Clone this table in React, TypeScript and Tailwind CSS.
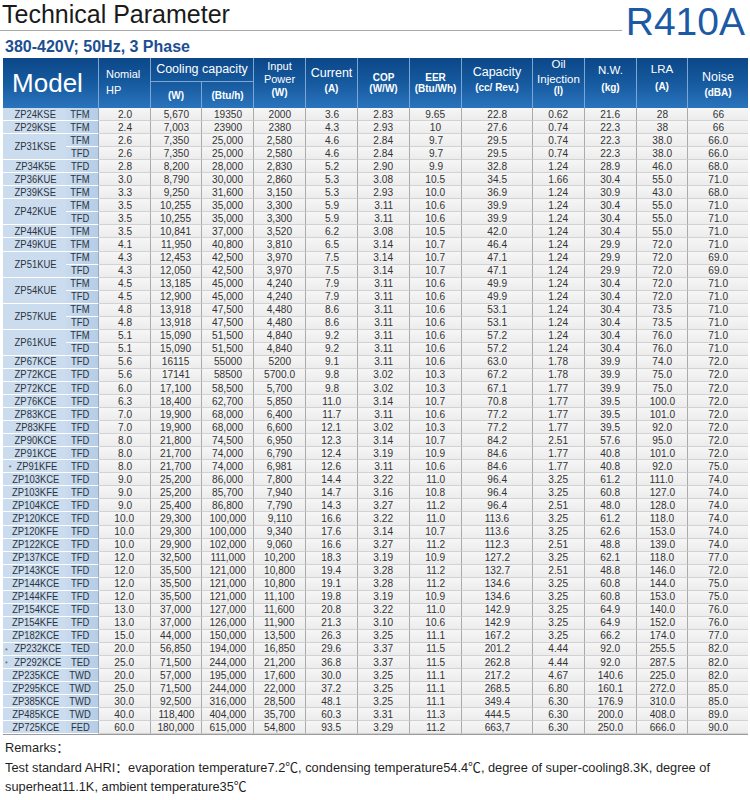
import React from "react";

// name (null = continues the model above), type, values
const rows: [string | null, string, string][] = [
  ["ZP24KSE", "TFM", "2.0 5,670 19350 2000 3.6 2.83 9.65 22.8 0.62 21.6 28 66"],
  ["ZP29KSE", "TFM", "2.4 7,003 23900 2380 4.3 2.93 10 27.6 0.74 22.3 38 66"],
  ["ZP31KSE", "TFM", "2.6 7,350 25,000 2,580 4.6 2.84 9.7 29.5 0.74 22.3 38.0 66.0"],
  [null, "TFD", "2.6 7,350 25,000 2,580 4.6 2.84 9.7 29.5 0.74 22.3 38.0 66.0"],
  ["ZP34K5E", "TFD", "2.8 8,200 28,000 2,830 5.2 2.90 9.9 32.8 1.24 28.9 46.0 68.0"],
  ["ZP36KUE", "TFM", "3.0 8,790 30,000 2,860 5.3 3.08 10.5 34.5 1.66 30.4 55.0 71.0"],
  ["ZP39KSE", "TFM", "3.3 9,250 31,600 3,150 5.3 2.93 10.0 36.9 1.24 30.9 43.0 68.0"],
  ["ZP42KUE", "TFM", "3.5 10,255 35,000 3,300 5.9 3.11 10.6 39.9 1.24 30.4 55.0 71.0"],
  [null, "TFD", "3.5 10,255 35,000 3,300 5.9 3.11 10.6 39.9 1.24 30.4 55.0 71.0"],
  ["ZP44KUE", "TFM", "3.5 10,841 37,000 3,520 6.2 3.08 10.5 42.0 1.24 30.4 55.0 71.0"],
  ["ZP49KUE", "TFM", "4.1 11,950 40,800 3,810 6.5 3.14 10.7 46.4 1.24 29.9 72.0 71.0"],
  ["ZP51KUE", "TFM", "4.3 12,453 42,500 3,970 7.5 3.14 10.7 47.1 1.24 29.9 72.0 69.0"],
  [null, "TFD", "4.3 12,050 42,500 3,970 7.5 3.14 10.7 47.1 1.24 29.9 72.0 69.0"],
  ["ZP54KUE", "TFM", "4.5 13,185 45,000 4,240 7.9 3.11 10.6 49.9 1.24 30.4 72.0 71.0"],
  [null, "TFD", "4.5 12,900 45,000 4,240 7.9 3.11 10.6 49.9 1.24 30.4 72.0 71.0"],
  ["ZP57KUE", "TFM", "4.8 13,918 47,500 4,480 8.6 3.11 10.6 53.1 1.24 30.4 73.5 71.0"],
  [null, "TFD", "4.8 13,918 47,500 4,480 8.6 3.11 10.6 53.1 1.24 30.4 73.5 71.0"],
  ["ZP61KUE", "TFM", "5.1 15,090 51,500 4,840 9.2 3.11 10.6 57.2 1.24 30.4 76.0 71.0"],
  [null, "TFD", "5.1 15,090 51,500 4,840 9.2 3.11 10.6 57.2 1.24 30.4 76.0 71.0"],
  ["ZP67KCE", "TFD", "5.6 16115 55000 5200 9.1 3.11 10.6 63.0 1.78 39.9 74.0 72.0"],
  ["ZP72KCE", "TFD", "5.6 17141 58500 5700.0 9.8 3.02 10.3 67.2 1.78 39.9 75.0 72.0"],
  ["ZP72KCE", "TFD", "6.0 17,100 58,500 5,700 9.8 3.02 10.3 67.1 1.77 39.9 75.0 72.0"],
  ["ZP76KCE", "TFD", "6.3 18,400 62,700 5,850 11.0 3.14 10.7 70.8 1.77 39.5 100.0 72.0"],
  ["ZP83KCE", "TFD", "7.0 19,900 68,000 6,400 11.7 3.11 10.6 77.2 1.77 39.5 101.0 72.0"],
  ["ZP83KFE", "TFD", "7.0 19,900 68,000 6,600 12.1 3.02 10.3 77.2 1.77 39.5 92.0 72.0"],
  ["ZP90KCE", "TFD", "8.0 21,800 74,500 6,950 12.3 3.14 10.7 84.2 2.51 57.6 95.0 72.0"],
  ["ZP91KCE", "TFD", "8.0 21,700 74,000 6,790 12.4 3.19 10.9 84.6 1.77 40.8 101.0 72.0"],
  ["*ZP91KFE", "TFD", "8.0 21,700 74,000 6,981 12.6 3.11 10.6 84.6 1.77 40.8 92.0 75.0"],
  ["ZP103KCE", "TFD", "9.0 25,200 86,000 7,800 14.4 3.22 11.0 96.4 3.25 61.2 111.0 74.0"],
  ["ZP103KFE", "TFD", "9.0 25,200 85,700 7,940 14.7 3.16 10.8 96.4 3.25 60.8 127.0 74.0"],
  ["ZP104KCE", "TFD", "9.0 25,400 86,800 7,790 14.3 3.27 11.2 96.4 2.51 48.0 128.0 74.0"],
  ["ZP120KCE", "TFD", "10.0 29,300 100,000 9,110 16.6 3.22 11.0 113.6 3.25 61.2 118.0 74.0"],
  ["ZP120KFE", "TFD", "10.0 29,300 100,000 9,340 17.6 3.14 10.7 113.6 3.25 62.6 153.0 74.0"],
  ["ZP122KCE", "TFD", "10.0 29,900 102,000 9,060 16.6 3.27 11.2 112.3 2.51 48.8 139.0 74.0"],
  ["ZP137KCE", "TFD", "12.0 32,500 111,000 10,200 18.3 3.19 10.9 127.2 3.25 62.1 118.0 77.0"],
  ["ZP143KCE", "TFD", "12.0 35,500 121,000 10,800 19.4 3.28 11.2 132.7 2.51 48.8 146.0 72.0"],
  ["ZP144KCE", "TFD", "12.0 35,500 121,000 10,800 19.1 3.28 11.2 134.6 3.25 60.8 144.0 75.0"],
  ["ZP144KFE", "TFD", "12.0 35,500 121,000 11,100 19.8 3.19 10.9 134.6 3.25 60.8 153.0 75.0"],
  ["ZP154KCE", "TFD", "13.0 37,000 127,000 11,600 20.8 3.22 11.0 142.9 3.25 64.9 140.0 76.0"],
  ["ZP154KFE", "TFD", "13.0 37,000 126,000 11,900 21.3 3.10 10.6 142.9 3.25 64.9 152.0 76.0"],
  ["ZP182KCE", "TFD", "15.0 44,000 150,000 13,500 26.3 3.25 11.1 167.2 3.25 66.2 174.0 77.0"],
  ["*ZP232KCE", "TED", "20.0 56,850 194,000 16,850 29.6 3.37 11.5 201.2 4.44 92.0 255.5 82.0"],
  ["*ZP292KCE", "TED", "25.0 71,500 244,000 21,200 36.8 3.37 11.5 262.8 4.44 92.0 287.5 82.0"],
  ["ZP235KCE", "TWD", "20.0 57,000 195,000 17,600 30.0 3.25 11.1 217.2 4.67 140.6 225.0 82.0"],
  ["ZP295KCE", "TWD", "25.0 71,500 244,000 22,000 37.2 3.25 11.1 268.5 6.80 160.1 272.0 85.0"],
  ["ZP385KCE", "TWD", "30.0 92,500 316,000 28,500 48.1 3.25 11.1 349.4 6.30 176.9 310.0 85.0"],
  ["ZP485KCE", "TWD", "40.0 118,400 404,000 35,700 60.3 3.31 11.3 444.5 6.30 200.0 408.0 89.0"],
  ["ZP725KCE", "FED", "60.0 180,000 615,000 54,800 93.5 3.29 11.2 663,7 6.30 250.0 666.0 90.0"],
];

const unit = "font-['Liberation_Sans',Arial,sans-serif] font-bold text-[10px]";

const Header = () => (
  <div className="grid grid-cols-[96px_52px_51px_52px_52px_52px_52px_52px_71px_52px_52px_51px_60px] grid-rows-[24px_26px] bg-linear-to-b from-[#0b4788] via-[#165a9f] to-[#2a74bd] text-white font-['Liberation_Sans',Arial,sans-serif] text-center">
    <div className="row-span-2 flex items-center justify-center pr-[6px] text-[26px] border-r border-[#7fa6d2]">Model</div>
    <div className="row-span-2 border-r border-[#7fa6d2] pt-[8px] pl-[7px] text-left text-[11px] leading-[16px]">
      <div>Nomial</div>
      <div>HP</div>
    </div>
    <div className="col-span-2 flex items-center justify-center text-[12.5px] border-r border-b border-[#7fa6d2]">Cooling capacity</div>
    <div className="row-span-2 border-r border-[#7fa6d2] pt-[2px] text-[11px] leading-[13px]">
      <div>Input</div>
      <div>Power</div>
      <div className={unit}>(W)</div>
    </div>
    <div className="row-span-2 border-r border-[#7fa6d2] pt-[7px] leading-[16px]">
      <div className="text-[12.5px]">Current</div>
      <div className={unit}>(A)</div>
    </div>
    <div className="row-span-2 border-r border-[#7fa6d2] pt-[14px] leading-[11px]">
      <div className={unit}>COP</div>
      <div className={unit}>(W/W)</div>
    </div>
    <div className="row-span-2 border-r border-[#7fa6d2] pt-[14px] leading-[11px]">
      <div className={unit}>EER</div>
      <div className={unit}>(Btu/Wh)</div>
    </div>
    <div className="row-span-2 border-r border-[#7fa6d2] pt-[7px] leading-[15px]">
      <div className="text-[12.5px]">Capacity</div>
      <div className={unit}>(cc/ Rev.)</div>
    </div>
    <div className="row-span-2 border-r border-[#7fa6d2] text-[11.5px]">
      <div className="leading-[12px] pt-[0px]">Oil</div>
      <div className="leading-[11px] mt-[4px]">Injection</div>
      <div className={`${unit} leading-[11px]`}>(l)</div>
    </div>
    <div className="row-span-2 border-r border-[#7fa6d2] pt-[3px] leading-[18px]">
      <div className="text-[11.5px]">N.W.</div>
      <div className={unit}>(kg)</div>
    </div>
    <div className="row-span-2 border-r border-[#7fa6d2] pt-[2px] leading-[18px]">
      <div className="text-[11.5px]">LRA</div>
      <div className={unit}>(A)</div>
    </div>
    <div className="row-span-2 pt-[11px] leading-[16px]">
      <div className="text-[12.5px]">Noise</div>
      <div className={`${unit} text-[9.5px]`}>(dBA)</div>
    </div>
    <div className={`${unit} flex items-center justify-center border-r border-[#7fa6d2]`}>(W)</div>
    <div className={`${unit} flex items-center justify-center border-r border-[#7fa6d2]`}>(Btu/h)</div>
  </div>
);

const Body = () => (
  <div className="grid grid-cols-[63px_33px_52px_51px_52px_52px_52px_52px_52px_71px_52px_52px_51px_60px] auto-rows-[13.06px] font-['Liberation_Sans',Arial,sans-serif] text-[11.5px] leading-[13px] text-[#333] border-b border-[#9c9c9c]">
    {rows.map(([name, type, vals], i) => {
      const merged = rows[i + 1] && rows[i + 1][0] === null;
      const star = name?.startsWith("*");
      return (
        <React.Fragment key={i}>
          {name !== null && (
            <div
              className={`${merged ? "row-span-2" : ""} flex items-center justify-center pl-[2px] bg-[#cbdcee] border-b border-white text-[#2b3440]`}
            >
              {star && <span className="text-[7px] self-start mt-[1px] mr-[1px] text-[#555]">*</span>}
              <span className="inline-block scale-x-[0.82] whitespace-nowrap">{star ? name.slice(1) : name}</span>
            </div>
          )}
          <div className="flex items-center justify-center pr-[4px] bg-linear-to-r from-[#c8daee] to-[#b6cde6] border-b border-white border-r border-r-[#94aac4] text-[#2b3440]">
            <span className="inline-block scale-x-[0.82]">{type}</span>
          </div>
          {vals.split(" ").map((v, j) => (
            <div
              key={j}
              className={`flex items-center justify-center bg-linear-to-b from-[#f6f6f6] to-[#ececec] border-b border-b-[#d2d2d2] ${j < 11 ? "border-r border-r-[#ababab]" : ""}`}
            >
              <span className="inline-block scale-x-[0.88] whitespace-nowrap">{v}</span>
            </div>
          ))}
        </React.Fragment>
      );
    })}
  </div>
);

export default function App() {
  return (
    <div className="w-[750px] h-[800px] bg-white overflow-hidden">
      <div className="flex items-start">
        <div className="flex-1 mr-[4px]">
          <div className="pl-[2px] text-[25px] leading-[28px] text-[#1a1a1a] font-['Liberation_Sans',Arial,sans-serif]">
            Technical Parameter
          </div>
          <div className="mt-[2px] border-b border-[#aaaaaa]" />
        </div>
        <div className="pr-[5px] text-[39px] leading-[44px] text-[#1c5aa5] font-['Liberation_Sans',Arial,sans-serif]">
          R410A
        </div>
      </div>
      <div className="pl-[5px] -mt-[6.5px] text-[16px] leading-[18px] font-bold text-[#1b4f91] font-['Liberation_Sans',Arial,sans-serif]">
        380-420V; 50Hz, 3 Phase
      </div>
      <div className="ml-[3px] mt-[2.5px] w-[745px]">
        <Header />
        <Body />
      </div>
      <div className="mt-[3px] pl-[5px] text-[12.8px] leading-[19.5px] text-[#1f1f1f] font-['Liberation_Sans',Arial,'Noto_Sans_CJK_SC',sans-serif]">
        <div>Remarks：</div>
        <div>
          Test standard AHRI：evaporation temperature7.2℃, condensing temperature54.4℃, degree of super-cooling8.3K, degree of
          <br />
          superheat11.1K, ambient temperature35℃
        </div>
      </div>
    </div>
  );
}
